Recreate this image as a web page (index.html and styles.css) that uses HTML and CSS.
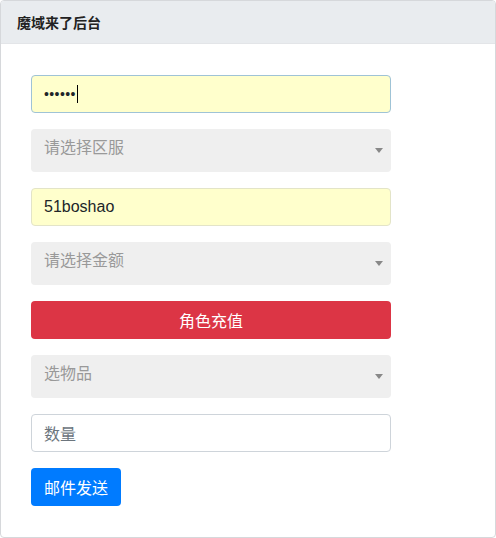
FILE: index.html
```html
<!DOCTYPE html>
<html lang="zh-CN">
<head>
<meta charset="utf-8">
<title>魔域来了后台</title>
<link rel="stylesheet" href="styles.css">
</head>
<body>
<div class="card">
  <div class="card-header">魔域来了后台</div>
  <div class="card-body">
    <div class="field autofill focus"><span class="dots">••••••</span><span class="caret"></span></div>
    <div class="select"><span class="ph">请选择区服</span><b class="arrow"></b></div>
    <div class="field autofill">51boshao</div>
    <div class="select"><span class="ph">请选择金额</span><b class="arrow"></b></div>
    <div class="btn btn-danger btn-block">角色充值</div>
    <div class="select"><span class="ph">选物品</span><b class="arrow"></b></div>
    <div class="field"><span class="placeholder">数量</span></div>
    <div class="actions"><div class="btn btn-primary">邮件发送</div></div>
  </div>
</div>
</body>
</html>
```
FILE: styles.css
```css
html, body {
  margin: 0;
  padding: 0;
  background: #fff;
}
body {
  font-family: "Liberation Sans", "Noto Sans CJK SC", sans-serif;
  color: #212529;
}
.card {
  width: 496px;
  height: 538px;
  box-sizing: border-box;
  border: 1px solid #d6d8db;
  border-radius: 4px;
  display: flex;
  flex-direction: column;
}
.card-header {
  height: 43px;
  box-sizing: border-box;
  background: #e9ecef;
  border-bottom: 1px solid #e3e5e8;
  padding: 0 16px;
  display: flex;
  align-items: center;
  font-size: 14px;
  font-weight: bold;
  color: #222;
  border-radius: 3px 3px 0 0;
}
.card-body {
  padding: 31px 104px 0 30px;
  display: flex;
  flex-direction: column;
  gap: 16px;
}
.field {
  height: 38px;
  box-sizing: border-box;
  border: 1px solid #ced4da;
  border-radius: 4px;
  background: #fff;
  padding: 0 12px;
  display: flex;
  align-items: center;
  font-size: 16px;
  color: #212529;
}
.field.autofill {
  background: #ffffcc;
  border-color: #e3e4c8;
}
.field.focus {
  border-color: #9fc3d6;
}
.dots {
  font-size: 14px;
  letter-spacing: 0.4px;
}
.caret {
  display: inline-block;
  width: 1px;
  height: 18px;
  background: #000;
  margin-left: 1px;
}
.placeholder {
  color: #6c757d;
}
.select {
  height: 43px;
  box-sizing: border-box;
  background: #efefef;
  border-radius: 4px;
  padding: 0 8px 0 13px;
  display: flex;
  align-items: center;
  justify-content: space-between;
  font-size: 16px;
}
.select .ph {
  color: #999;
  margin-top: -10px;
}
.arrow {
  width: 0;
  height: 0;
  border-style: solid;
  border-width: 5px 4px 0 4px;
  border-color: #888 transparent transparent transparent;
  margin-top: 0;
}
.btn {
  height: 38px;
  box-sizing: border-box;
  border-radius: 4px;
  display: flex;
  align-items: center;
  justify-content: center;
  font-size: 16px;
  color: #fff;
  padding: 0 13px;
}
.btn-danger {
  background: #dc3545;
}
.btn-primary {
  background: #007bff;
}
.actions {
  display: flex;
}
```
